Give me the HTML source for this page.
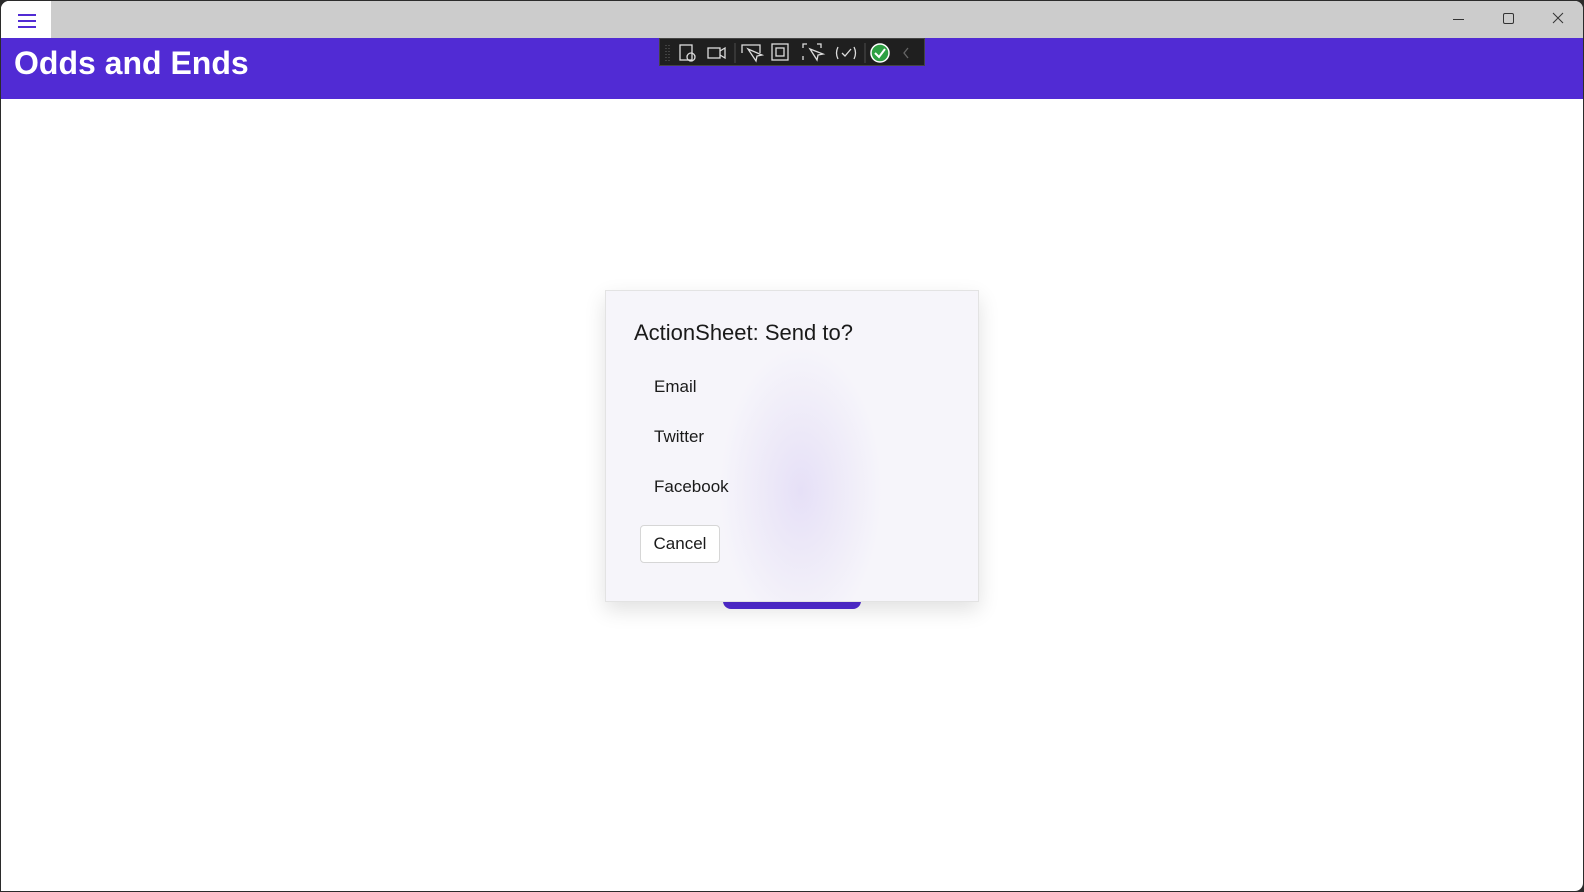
<!DOCTYPE html>
<html><head><meta charset="utf-8"><style>
body{margin:0;width:1584px;height:892px;overflow:hidden;background:#2b2b2b;font-family:"Segoe UI","Liberation Sans",sans-serif;position:relative}
.win{position:absolute;left:1px;top:1px;width:1582px;height:890px;background:#fff;border-radius:8px 8px 8px 0;overflow:hidden}
.tb{position:absolute;left:0;top:0;width:100%;height:37px;background:#cccccc}
.ham{position:absolute;left:0;top:0;width:50px;height:37px;background:#fff}
.ham i{position:absolute;left:17px;width:18px;height:2px;background:#512bd4}
.hdr{position:absolute;left:0;top:37px;width:100%;height:61px;background:#512bd4}
.hdr h1{margin:0;position:absolute;left:13px;top:7px;font-size:32px;color:#fff;font-weight:600;letter-spacing:0}
.tool{position:absolute;left:659px;top:38px;width:266px;height:28px;background:#1f1f1f;border:1px solid #444;box-sizing:border-box}
.dlg{position:absolute;left:604px;top:289px;width:374px;height:312px;background:radial-gradient(ellipse 90px 160px at 195px 200px,#e6e0f7,#f6f5fa 90%);border:1px solid #e3e3e3;box-shadow:0 8px 20px rgba(0,0,0,.12);box-sizing:border-box}
.dlg .t{position:absolute;left:28px;top:29px;font-size:22px;color:#1a1a1a}
.dlg .o{position:absolute;left:48px;font-size:17px;color:#1a1a1a}
.cb{position:absolute;left:34px;top:234px;width:80px;height:38px;background:#fff;border:1px solid #d6d6d6;border-radius:4px;box-sizing:border-box;font-size:17px;text-align:center;line-height:36px;color:#1a1a1a}
.pb{position:absolute;left:722px;top:590px;width:138px;height:18px;background:#512bd4;border-radius:0 0 8px 8px}
</style></head><body>
<div class="win">
<div class="tb"></div>
<div class="ham"><i style="top:13px"></i><i style="top:19px"></i><i style="top:25px"></i></div>
<svg style="position:absolute;left:1440px;top:8px" width="140" height="22" fill="none" stroke="#333" stroke-width="1">
<line x1="12" y1="10.5" x2="23" y2="10.5"/><rect x="62.5" y="4.5" width="10" height="10" rx="1.5"/><path d="M112 4 L122 14 M122 4 L112 14"/></svg>
<div class="hdr"><h1>Odds and Ends</h1></div>
<div class="pb"></div>
<div class="dlg">
<div class="t">ActionSheet: Send to?</div>
<div class="o" style="top:86px">Email</div>
<div class="o" style="top:136px">Twitter</div>
<div class="o" style="top:186px">Facebook</div>
<div class="cb">Cancel</div>
</div>
</div>
<div class="tool"><svg width="266" height="28" fill="none" stroke="#ddd" stroke-width="1.3">
<path d="M6 6v16M9 6v16" stroke="#555" stroke-dasharray="1 2"/>
<rect x="20" y="6" width="12" height="15"/><circle cx="31" cy="18" r="4"/>
<rect x="48" y="9" width="12" height="10"/><path d="M60 12l5-3v10l-5-3"/>
<line x1="75" y1="4" x2="75" y2="24" stroke="#444"/>
<path d="M82 14V6h18v8M88 10l8 12 1-5 5-1z"/>
<rect x="112" y="5" width="16" height="16"/><rect x="116" y="9" width="8" height="8"/>
<path d="M143 9V5h4M157 5h4v4M143 17v4M150 10l7 11 1-5 5-1z"/>
<path d="M178 8q-3 6 0 12M194 8q3 6 0 12M182 14l3 3 6-7"/>
<line x1="205" y1="4" x2="205" y2="24" stroke="#444"/>
<circle cx="220" cy="14" r="9" fill="#2ea043" stroke="#fff" stroke-width="1.5"/><path d="M215 14l4 4 6-8" stroke="#fff" stroke-width="2"/>
<path d="M248 9l-4 5 4 5" stroke="#666"/></svg></div>
</body></html>
